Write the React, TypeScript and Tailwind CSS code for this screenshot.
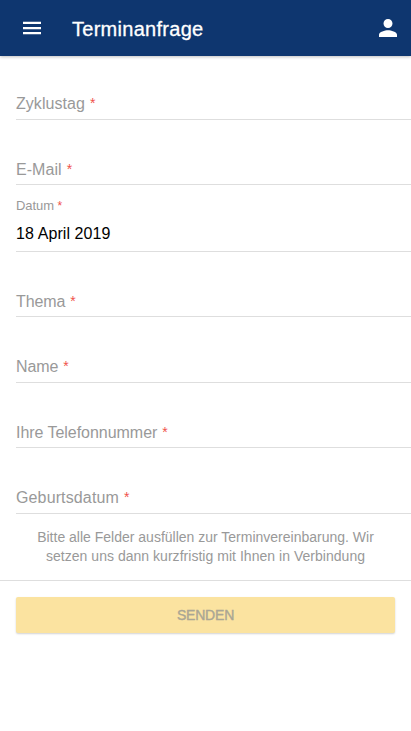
import React from 'react';

type FieldProps = { label: string; height: string; spacing: string };

function Field({ label, height, spacing }: FieldProps) {
  return (
    <label className={`ml-4 flex items-end border-b border-[#dedede] text-base leading-5 text-[#999] ${height}`}>
      <span className={spacing}>{label}</span>
      <span className="mb-px ml-[5px] text-sm leading-5 text-[#f0524b]">*</span>
    </label>
  );
}

export default function App() {
  return (
    <div className="flex h-[731px] w-[411px] flex-col overflow-hidden bg-white font-['Liberation_Sans',Arial,sans-serif]">
      <header className="flex h-14 shrink-0 items-center bg-[#0e366f] pl-5 pr-[11px] text-white shadow-[0_1px_3px_rgba(0,0,0,0.25)]">
        <button aria-label="Menü" className="h-6 w-6">
          <svg viewBox="0 0 24 24" className="h-6 w-6" fill="currentColor">
            <path d="M3 18.200h18v-2.200H3v2.200zm0-5h18v-2.200H3v2.200zm0-7.400v2.200h18V5.800H3z" />
          </svg>
        </button>
        <h1 className="ml-7 flex-1 pt-0.5 text-xl leading-6 tracking-[0.28px] [-webkit-text-stroke:0.3px_white]">Terminanfrage</h1>
        <button aria-label="Profil" className="h-6 w-6">
          <svg viewBox="0 0 24 24" className="h-6 w-6" fill="currentColor">
            <path d="M12 12c2.500 0 4.500-2 4.500-4.500S14.500 3 12 3 7.500 5 7.500 7.500 9.500 12 12 12zm0 2.200c-3 0-9 1.500-9 4.500V21h18v-2.300c0-3-6-4.500-9-4.500z" />
          </svg>
        </button>
      </header>
      <form className="flex flex-col">
        <Field label="Zyklustag" height="h-16 pb-[5px]" spacing="tracking-[0.05px]" />
        <Field label="E-Mail" height="h-[65px] pb-1" spacing="tracking-[0.05px]" />
        <div className="ml-4 h-[67px] border-b border-[#dedede] pt-3">
          <div className="text-[13px] leading-[18px] tracking-[-0.08px] text-[#999]">
            Datum <span className="text-xs text-[#f0524b]">*</span>
          </div>
          <div className="mt-[9px] text-base leading-5 tracking-[0.09px] text-black">18 April 2019</div>
        </div>
        <Field label="Thema" height="h-[65px] pb-1" spacing="-tracking-[0.1px]" />
        <Field label="Name" height="h-[66px] pb-[5px]" spacing="-tracking-[0.1px]" />
        <Field label="Ihre Telefonnummer" height="h-[65px] pb-1" spacing="-tracking-[0.04px]" />
        <Field label="Geburtsdatum" height="h-[66px] pb-[5px]" spacing="tracking-[0.13px]" />
        <p className="h-[67px] border-b border-[#dedede] pt-3.5 text-center text-sm leading-[19px] text-[#999]">
          Bitte alle Felder ausfüllen zur Terminvereinbarung. Wir
          <br />
          <span className="tracking-[0.03px]">setzen uns dann kurzfristig mit Ihnen in Verbindung</span>
        </p>
        <button
          type="button"
          className="mx-4 mt-4 h-9 rounded-xs bg-[#fbe3a0] text-sm tracking-[-0.2px] text-[#aaa694] shadow-[0_1px_2px_rgba(0,0,0,0.18)] [-webkit-text-stroke:0.4px_#aaa694]"
        >
          SENDEN
        </button>
      </form>
    </div>
  );
}
